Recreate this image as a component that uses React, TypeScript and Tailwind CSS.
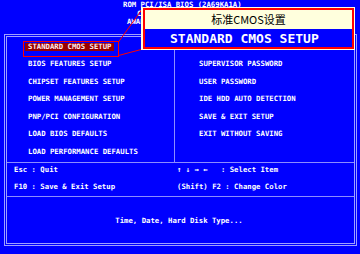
const LEFT_ITEMS = [
  "BIOS FEATURES SETUP",
  "CHIPSET FEATURES SETUP",
  "POWER MANAGEMENT SETUP",
  "PNP/PCI CONFIGURATION",
  "LOAD BIOS DEFAULTS",
  "LOAD PERFORMANCE DEFAULTS",
];

const RIGHT_ITEMS = [
  "",
  "SUPERVISOR PASSWORD",
  "USER PASSWORD",
  "IDE HDD AUTO DETECTION",
  "SAVE & EXIT SETUP",
  "EXIT WITHOUT SAVING",
  "",
];

export default function App() {
  return (
    <div className="relative w-[360px] h-[254px] overflow-hidden bg-[#0000ff] text-white font-['DejaVu_Sans_Mono',monospace] font-bold text-[7.3px] whitespace-pre">
      {/* header, mostly hidden by the callout */}
      <div className="h-[34px] pt-[1px] leading-[8.5px]">
        <div className="pl-[123px]">ROM PCI/ISA BIOS (2A69KA1A)</div>
        <div className="pl-[137px]">CMOS SETUP UTILITY</div>
        <div className="pl-[127px]">AWARD SOFTWARE, INC.</div>
      </div>

      {/* main frame */}
      <div className="ml-[4px] w-[353px] h-[212px] border-[3px] border-double border-[#a0a0ff] flex flex-col">
        <div className="flex h-[126px] border-b border-[#8c8cff]">
          <div className="w-[168px] border-r border-[#8c8cff] pt-[1.25px] pl-[21px]">
            <div className="h-[17.5px] flex items-center">
              <span className="-ml-[3px] px-[3px] bg-[#990000] leading-[8.5px] text-[#ffe8e8]">STANDARD CMOS SETUP</span>
            </div>
            {LEFT_ITEMS.map((t) => (
              <div key={t} className="h-[17.5px] flex items-center">{t}</div>
            ))}
          </div>
          <div className="flex-1 pt-[1.25px] pl-[24px]">
            {RIGHT_ITEMS.map((t, i) => (
              <div key={i} className="h-[17.5px] flex items-center">{t}</div>
            ))}
          </div>
        </div>

        <div className="h-[34px] border-b border-[#8c8cff] flex flex-col gap-[3.5px]">
          <div className="h-[14px] flex items-center">
            <div className="w-[170px] pl-[7px]">Esc : Quit</div>
            <div>↑ ↓ → ←   : Select Item</div>
          </div>
          <div className="h-[14px] flex items-center">
            <div className="w-[170px] pl-[7px]">F10 : Save &amp; Exit Setup</div>
            <div>(Shift) F2 : Change Color</div>
          </div>
        </div>

        <div className="flex-1 flex items-center justify-center pr-[3px] pt-[2px]">Time, Date, Hard Disk Type...</div>
      </div>

      {/* annotation: highlight box, leader lines, callout */}
      <div className="absolute left-[23px] top-[40.5px] w-[96px] h-[16.5px] border border-[#ff0000]" />
      <svg className="absolute inset-0" width="360" height="254">
        <line x1="118.5" y1="42" x2="143" y2="8" stroke="#ff0000" strokeWidth="1" />
        <line x1="118.5" y1="55.5" x2="143" y2="49" stroke="#ff0000" strokeWidth="1" />
      </svg>
      <div className="absolute left-[141px] top-[7px] w-[214px] h-[43px] bg-[#ffffe0] pl-[2px] pr-[1px] pt-[1px] pb-[1px]">
        <div className="h-full border-2 border-[#ff0000] flex flex-col">
          <div className="h-[19px] bg-[#ffffdd] flex items-center justify-center text-black font-normal text-[11px] font-['Noto_Sans_CJK_SC',sans-serif]">
            标准CMOS设置
          </div>
          <div className="flex-1 bg-[#0000ff] flex items-center pl-[25px] text-[13px] leading-none">STANDARD CMOS SETUP</div>
        </div>
      </div>
    </div>
  );
}
